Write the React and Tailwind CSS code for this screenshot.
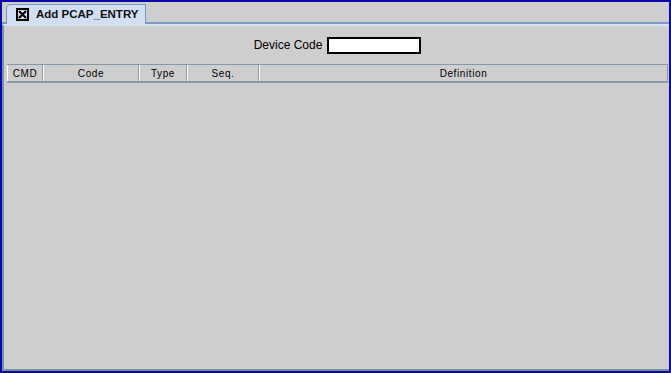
import React from 'react';

const columns = [
  { label: 'CMD', w: 'w-[36px]' },
  { label: 'Code', w: 'w-[96px]' },
  { label: 'Type', w: 'w-[48px]' },
  { label: 'Seq.', w: 'w-[72px]' },
  { label: 'Definition', w: 'flex-1' },
];

const App = () => {
  return (
    <div
      className="w-[671px] h-[373px] bg-[#0a0aa6] p-[2px] overflow-hidden"
      style={{ fontFamily: '"Liberation Sans", Arial, sans-serif' }}
    >
      <div className="w-full h-full bg-[#cecece] flex flex-col">
        {/* Tab strip */}
        <div className="h-[22px] flex items-end pl-[4px] border-b-[2px] border-[#7a98c8] relative">
          <div className="h-[20px] w-[140px] bg-[#d2def2] border border-b-0 border-[#7a98c8] rounded-tl-[5px] flex items-center pl-[9px] gap-[7px] relative -mb-[2px] z-10">
            <div className="w-[13px] h-[13px] border-[2px] border-black bg-[#d2def2] flex items-center justify-center">
              <svg width="9" height="9" viewBox="0 0 9 9">
                <path d="M1 1 L8 8 M8 1 L1 8" stroke="black" strokeWidth="2" />
              </svg>
            </div>
            <span className="text-[11.5px] font-bold text-[#111] leading-none">Add PCAP_ENTRY</span>
          </div>
        </div>
        {/* Content panel */}
        <div className="flex-1 flex flex-col bg-[#cecece] border-l-[2px] border-l-[#7890b4] border-t-[2px] border-t-[#d8e2f4] border-b-[2px] border-b-[#7890a0] pl-[2px]">
          <div className="h-[38px] flex items-center justify-center gap-[5px]">
            <span className="text-[12px] text-black">Device Code</span>
            <div className="w-[94px] h-[17px] bg-white border-[2px] border-black" />
          </div>
          <div className="h-[19px] flex ml-[1px] mr-[1px] border-t border-t-[#8898a8] border-b-[2px] border-b-[#8898a8]">
            {columns.map((c) => (
              <div
                key={c.label}
                className={`${c.w} h-full flex items-center justify-center border-l border-l-white border-r border-r-[#8898a8] text-[10px] tracking-[0.6px] text-black`}
              >
                {c.label}
              </div>
            ))}
          </div>
          <div className="flex-1" />
        </div>
      </div>
    </div>
  );
};

export default App;
